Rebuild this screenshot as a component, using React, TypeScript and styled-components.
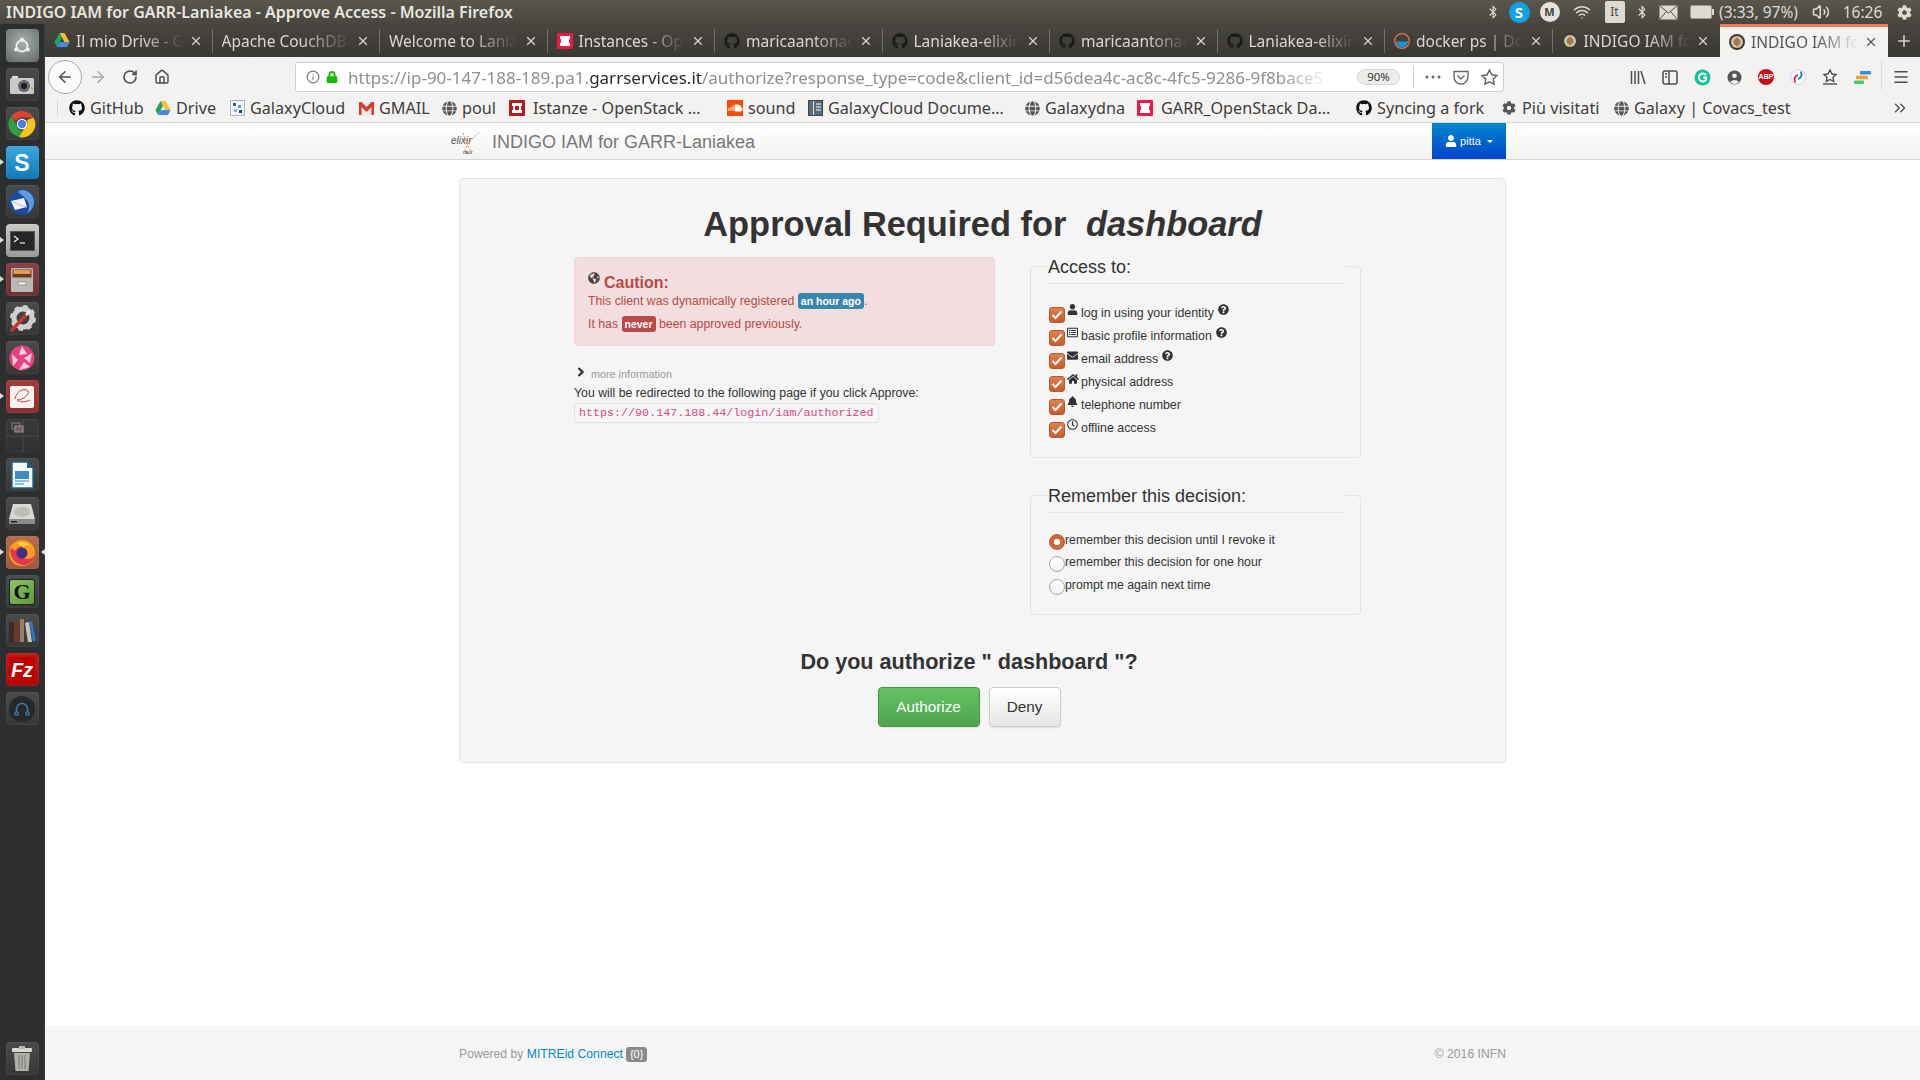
import { ReactNode } from 'react';
import styled, { createGlobalStyle } from 'styled-components';
import {
  FaBell,
  FaBluetoothB,
  FaCog,
  FaEnvelope,
  FaGithub,
  FaGlobe,
  FaGlobeAmericas,
  FaHome,
  FaLock,
  FaQuestionCircle,
  FaRegClock,
  FaRegListAlt,
  FaUser,
} from 'react-icons/fa';
import {
  ArrowLeft,
  ArrowRight,
  ChevronsRight,
  House,
  Info,
  Menu,
  Plus,
  RotateCw,
  Volume2,
  Wifi,
  X,
} from 'lucide-react';

const ChromeFont = `"Noto Sans", "Open Sans", sans-serif`;
const PageFont = `"Liberation Sans", Arial, sans-serif`;

const GlobalStyle = createGlobalStyle`
  html, body {
    margin: 0;
    height: 100%;
    background: #fff;
  }
  * {
    box-sizing: border-box;
  }
`;

const Screen = styled.div`
  width: 1920px;
  height: 1080px;
  overflow: hidden;
  display: flex;
  flex-direction: column;
  font-family: ${ChromeFont};
`;

/* ---- desktop panel ---- */

const TopBar = styled.div`
  height: 24px;
  flex: none;
  display: flex;
  align-items: center;
  padding-left: 6px;
  background: linear-gradient(#5a574e, #48463f);
  color: #e8e6e0;
`;

const WindowTitle = styled.div`
  font-size: 16px;
  font-weight: 600;
  white-space: nowrap;
`;

const StatusArea = styled.div`
  margin-left: auto;
  display: flex;
  align-items: center;
  height: 24px;
`;

const StatusSlot = styled.div<{ $w: number; $pl?: number }>`
  width: ${({ $w }) => $w}px;
  padding-left: ${({ $pl }) => $pl || 0}px;
  display: flex;
  align-items: center;
  justify-content: center;
  color: #dedbd2;
  font-size: 15.5px;
  white-space: nowrap;
`;

const SkypeDot = styled.div`
  width: 21px;
  height: 21px;
  border-radius: 50%;
  background: #11a3e4;
  color: #fff;
  font-size: 15px;
  font-weight: 700;
  line-height: 21px;
  text-align: center;
`;

const MegaDot = styled.div`
  width: 20px;
  height: 20px;
  border-radius: 50%;
  background: #e4e2dc;
  color: #45433c;
  font-size: 11px;
  font-weight: 700;
  line-height: 20px;
  text-align: center;
`;

const LangTile = styled.div`
  width: 20px;
  height: 22px;
  border-radius: 2px;
  background: #dcdad3;
  color: #4a4842;
  font-size: 12px;
  line-height: 22px;
  text-align: center;
`;

const Workspace = styled.div`
  flex: 1;
  min-height: 0;
  display: flex;
`;

/* ---- launcher ---- */

const Launcher = styled.nav`
  width: 45px;
  flex: none;
  display: flex;
  flex-direction: column;
  align-items: center;
  gap: 6px;
  padding-top: 5px;
  background: #2c2e2f;
  border-right: 1px solid #3a3b3b;
`;

const Tile = styled.div<{ $bg?: string; $pushDown?: boolean }>`
  position: relative;
  width: 33px;
  height: 33px;
  flex: none;
  border-radius: 4px;
  display: flex;
  align-items: center;
  justify-content: center;
  background: ${({ $bg }) => $bg || 'linear-gradient(#4a4b4b, #363838)'};
  box-shadow: inset 0 0 0 1px rgba(255, 255, 255, 0.05);
  margin-top: ${({ $pushDown }) => ($pushDown ? 'auto' : 0)};
  margin-bottom: ${({ $pushDown }) => ($pushDown ? '5px' : 0)};
`;

const Pip = styled.span<{ $right?: boolean }>`
  position: absolute;
  top: 13px;
  ${({ $right }) => ($right ? 'right: -6px;' : 'left: -6px;')}
  width: 0;
  height: 0;
  border-top: 3px solid transparent;
  border-bottom: 3px solid transparent;
  ${({ $right }) => ($right ? 'border-right: 4px solid #ddd;' : 'border-left: 4px solid #ddd;')}
`;

const FzLetters = styled.div`
  width: 26px;
  height: 26px;
  background: #bf0000;
  color: #fff;
  font: italic 700 20px/26px ${PageFont};
  text-align: center;
`;

const GLetter = styled.div`
  width: 26px;
  height: 26px;
  border-radius: 3px;
  background: linear-gradient(135deg, #8bc565, #5f9a41);
  border: 1px solid #222;
  color: #111;
  font: 700 22px/24px "Liberation Serif", serif;
  text-align: center;
`;

const launcherIcons: { key: string; bg?: string; pip?: boolean; both?: boolean; icon: ReactNode }[] = [
  {
    key: 'ubuntu',
    bg: 'radial-gradient(circle at 50% 40%, #a9b0ae, #5f6665)',
    icon: (
      <svg width="22" height="22" viewBox="0 0 22 22">
        <circle cx="11" cy="11" r="5.500" fill="none" stroke="#eee" strokeWidth="2" />
        <circle cx="11" cy="4.500" r="2" fill="#eee" />
        <circle cx="5.200" cy="14.500" r="2" fill="#eee" />
        <circle cx="16.800" cy="14.500" r="2" fill="#eee" />
      </svg>
    ),
  },
  {
    key: 'camera',
    icon: (
      <svg width="26" height="22" viewBox="0 0 26 22">
        <rect x="3" y="2" width="6" height="3" fill="#ddd" />
        <rect x="1" y="4" width="24" height="16" rx="1.500" fill="#c9c9c9" />
        <circle cx="15" cy="12" r="6" fill="#666" />
        <circle cx="15" cy="12" r="3" fill="#16202c" />
        <rect x="22" y="13" width="2" height="3" fill="#e3a33c" />
      </svg>
    ),
  },
  {
    key: 'chrome',
    icon: (
      <svg width="28" height="28" viewBox="0 0 28 28">
        <path d="M14 1a13 13 0 0 1 11.300 6.500H14a6.500 6.500 0 0 0-6 4L3.400 6A13 13 0 0 1 14 1z" fill="#e0412f" />
        <path d="M3.400 6 8.900 15.700a6.500 6.500 0 0 0 6 4.800L11 27A13 13 0 0 1 3.400 6z" fill="#2f9e44" />
        <path d="M25.300 7.500A13 13 0 0 1 11 27l5.600-9.300A6.500 6.500 0 0 0 19 10z" fill="#f6c31c" />
        <circle cx="14" cy="14" r="5.200" fill="#fff" />
        <circle cx="14" cy="14" r="4.200" fill="#4a7fe5" />
      </svg>
    ),
  },
  {
    key: 'skype',
    bg: 'linear-gradient(#3aa8e0, #1278b8)',
    pip: true,
    icon: (
      <svg width="28" height="28" viewBox="0 0 28 28">
        <text x="14" y="22" textAnchor="middle" fontFamily={PageFont} fontWeight="700" fontSize="23" fill="#fff">
          S
        </text>
      </svg>
    ),
  },
  {
    key: 'thunderbird',
    icon: (
      <svg width="28" height="28" viewBox="0 0 28 28">
        <circle cx="14" cy="14" r="13" fill="#1d4a9c" />
        <path d="M14 2a12 12 0 0 1 12 12c0 5-3 9-7 11 3-4 3-10-1-14-2-3-6-5-8-7 1-1 3-2 4-2z" fill="#5d9be0" />
        <path d="M3 13l13-3 3 9-12 3z" fill="#f3f3f3" />
        <path d="M3 13l9 4 7 2" fill="none" stroke="#b9c3d3" strokeWidth="1" />
      </svg>
    ),
  },
  {
    key: 'terminal',
    bg: 'linear-gradient(#c9c9c6, #9a9a97)',
    pip: true,
    icon: (
      <svg width="25" height="20" viewBox="0 0 25 20">
        <rect x="0.500" y="0.500" width="24" height="19" fill="#262626" stroke="#555" />
        <path d="M4 5l4 3-4 3" fill="none" stroke="#eee" strokeWidth="1.200" />
        <path d="M10 12h5" stroke="#eee" strokeWidth="1.200" />
      </svg>
    ),
  },
  {
    key: 'files',
    bg: 'linear-gradient(#864248, #6c3238)',
    pip: true,
    icon: (
      <svg width="24" height="26" viewBox="0 0 24 26">
        <rect x="1" y="1" width="22" height="24" rx="1.500" fill="#b9b9b6" />
        <rect x="2.500" y="2.500" width="19" height="8" fill="#6b3b24" />
        <rect x="3.500" y="3" width="17" height="4" fill="#e99a4c" />
        <rect x="8" y="15" width="8" height="3" fill="#f0f0f0" stroke="#777" strokeWidth=".6" />
      </svg>
    ),
  },
  {
    key: 'tools',
    icon: (
      <svg width="28" height="28" viewBox="0 0 28 28">
        <circle cx="15" cy="13" r="9" fill="none" stroke="#cfcfcf" strokeWidth="5" />
        <circle cx="15" cy="13" r="11.500" fill="none" stroke="#cfcfcf" strokeWidth="3" strokeDasharray="4.500 4.500" />
        <path d="M4 25L18 10" stroke="#c8352b" strokeWidth="3.400" strokeLinecap="round" />
        <path d="M18 10l4-4" stroke="#e8e8e8" strokeWidth="2.600" />
      </svg>
    ),
  },
  {
    key: 'ball',
    icon: (
      <svg width="26" height="26" viewBox="0 0 26 26">
        <circle cx="13" cy="13" r="12.500" fill="#e83f83" />
        <path d="M13 1l5 8-8 1zM3 9l6 6-5 6zM23 8l-2 10-6-5zM10 25l5-8 6 5z" fill="#f9cfdd" />
      </svg>
    ),
  },
  {
    key: 'doc',
    bg: 'linear-gradient(#a63b3c, #8c2e30)',
    pip: true,
    icon: (
      <svg width="26" height="24" viewBox="0 0 26 24">
        <rect x="1" y="1" width="24" height="22" rx="2" fill="#f3f3f1" />
        <path d="M6 14C8 4 17 3 19 6s-5 9-11 9c5 3 9 2 13 0" fill="none" stroke="#d33a36" strokeWidth="1" />
      </svg>
    ),
  },
  {
    key: 'workspaces',
    bg: 'linear-gradient(#3a3a3c, #2f2f31)',
    icon: (
      <svg width="33" height="33" viewBox="0 0 33 33">
        <path d="M17 0v33M0 17h33" stroke="#4c4c4c" />
        <rect x="6" y="4" width="8" height="6" fill="none" stroke="#8a7f85" />
        <rect x="9" y="7" width="8" height="6" fill="#6a5f65" stroke="#a09498" />
      </svg>
    ),
  },
  {
    key: 'writer',
    icon: (
      <svg width="24" height="28" viewBox="0 0 24 28">
        <path d="M2 1h15l6 6v20H2z" fill="#f4f7fa" stroke="#20628f" strokeWidth="1.400" />
        <path d="M17 1l6 6h-6z" fill="#20628f" />
        <rect x="5" y="10" width="14" height="8" fill="#3d8cc1" />
        <path d="M5 20h14M5 23h9" stroke="#6eb0dc" strokeWidth="1.400" />
      </svg>
    ),
  },
  {
    key: 'disk',
    icon: (
      <svg width="28" height="22" viewBox="0 0 28 22">
        <path d="M5 1h18l4 15v5H1v-5z" fill="#d8d8d5" />
        <ellipse cx="14" cy="9" rx="8" ry="5" fill="#bdbdba" />
        <rect x="1" y="16" width="26" height="5" fill="#8a8a88" />
        <rect x="3" y="18" width="6" height="1.500" fill="#222" />
      </svg>
    ),
  },
  {
    key: 'firefox',
    bg: 'linear-gradient(#b66e4c, #9c5b3e)',
    pip: true,
    both: true,
    icon: (
      <svg width="28" height="28" viewBox="0 0 28 28">
        <circle cx="14" cy="14" r="13" fill="#ff9b1f" />
        <path d="M2 12c1 9 8 15 15 14 5-1 9-5 10-10-3 4-8 5-11 3-3-1-4-4-3-6l4-1c-1-2-3-2-3-5-4 1-6 3-7 5-1-1-2-2-2-3-2 1-3 2-3 3z" fill="#e8344f" />
        <circle cx="14" cy="14" r="5.500" fill="#3b3486" />
        <path d="M9 4c4-2 10-1 14 3-3-1-6-1-8 1z" fill="#ffd23a" />
      </svg>
    ),
  },
  { key: 'g', icon: <GLetter>G</GLetter> },
  {
    key: 'books',
    icon: (
      <svg width="28" height="25" viewBox="0 0 28 25">
        <rect x="1" y="4" width="5" height="20" fill="#3e2a28" />
        <rect x="6" y="3" width="5" height="21" fill="#6b3a25" />
        <rect x="12" y="1" width="4" height="23" fill="#9a7f62" />
        <path d="M17 5l4-1 3 20-4 0z" fill="#c9c5b8" />
        <path d="M21 4l3-1 4 19-3 2z" fill="#2f74bf" />
      </svg>
    ),
  },
  { key: 'fz', bg: 'linear-gradient(#c01818, #a30e0e)', icon: <FzLetters>Fz</FzLetters> },
  {
    key: 'headphones',
    icon: (
      <svg width="28" height="28" viewBox="0 0 28 28">
        <circle cx="14" cy="14" r="13" fill="#26282a" />
        <path d="M8.500 17v-3a5.500 5.500 0 0 1 11 0v3" fill="none" stroke="#3d7fb5" strokeWidth="1.400" />
        <circle cx="8.500" cy="18.500" r="1.700" fill="none" stroke="#3d7fb5" strokeWidth="1.300" />
        <circle cx="19.500" cy="18.500" r="1.700" fill="none" stroke="#3d7fb5" strokeWidth="1.300" />
      </svg>
    ),
  },
];

const TrashIcon = () => (
  <svg width="24" height="27" viewBox="0 0 24 27">
    <rect x="2" y="3" width="20" height="4" rx="1" fill="#d8d8d4" />
    <rect x="9" y="1" width="6" height="3" fill="#b8b8b4" />
    <path d="M4 8h16l-1.500 18h-13z" fill="#b0b0ac" />
    <path d="M9 10v14M12 10v14M15 10v14" stroke="#77776f" />
  </svg>
);

/* ---- tabs ---- */

const Browser = styled.div`
  flex: 1;
  min-width: 0;
  display: flex;
  flex-direction: column;
`;

const TabStrip = styled.div`
  height: 33px;
  flex: none;
  display: flex;
  align-items: stretch;
  background: linear-gradient(#48463f, #3a3832);
`;

const Tab = styled.div<{ $active?: boolean; $sep?: boolean }>`
  position: relative;
  width: 167.5px;
  flex: none;
  display: flex;
  align-items: center;
  padding: 0 10px 0 9px;
  gap: 6px;
  color: ${({ $active }) => ($active ? '#555' : '#d9d7d0')};
  background: ${({ $active }) => ($active ? '#f3f2f1' : 'transparent')};
  border-top: ${({ $active }) => ($active ? '3px solid #ef7b53' : '0')};

  &::after {
    content: '';
    display: ${({ $sep }) => ($sep ? 'block' : 'none')};
    position: absolute;
    top: 5px;
    bottom: 4px;
    right: 0;
    width: 1px;
    background: rgba(255, 255, 255, 0.25);
  }
`;

const TabLabel = styled.div`
  flex: 1;
  min-width: 0;
  overflow: hidden;
  white-space: nowrap;
  font-size: 15.5px;
  -webkit-mask-image: linear-gradient(to right, #000 62%, transparent 100%);
  mask-image: linear-gradient(to right, #000 62%, transparent 100%);
`;

const NewTab = styled.div`
  flex: 1;
  display: flex;
  align-items: center;
  justify-content: center;
  color: #d9d7d0;
`;

const DriveIcon = () => (
  <svg width="16" height="15" viewBox="0 0 16 15">
    <path d="M5.500 0h5l5 9h-5z" fill="#f6c02c" />
    <path d="M5.500 0L0.500 9l2.500 5 5-9z" fill="#1ea362" />
    <path d="M3 14h10l2.500-5h-10z" fill="#4a86e8" />
  </svg>
);

const StackIcon = ({ dark }: { dark?: boolean }) => {
  const tone = dark ? '#b9191f' : '#ed1944';
  return (
    <svg width="16" height="16" viewBox="0 0 16 16">
      <rect width="16" height="16" rx="1" fill={tone} />
      <rect x="3" y="3" width="10" height="10" fill="#fff" />
      <rect x="0" y="6" width="4" height="4" fill={tone} />
      <rect x="12" y="6" width="4" height="4" fill={tone} />
      {dark && <rect x="6" y="6" width="4" height="4" fill={tone} />}
    </svg>
  );
};

const IamFavicon = () => (
  <svg width="16" height="16" viewBox="0 0 16 16">
    <circle cx="8" cy="8" r="8" fill="#3f3c33" />
    <circle cx="8" cy="8" r="6" fill="#d1c6a8" />
    <circle cx="8" cy="8" r="3.500" fill="#8c8468" />
    <path d="M8 3.500v9" stroke="#d8671d" strokeWidth="1.600" />
  </svg>
);

const DockerFavicon = () => (
  <svg width="16" height="16" viewBox="0 0 16 16">
    <circle cx="8" cy="8" r="7.400" fill="none" stroke="#e8763c" strokeWidth="1.200" />
    <path d="M1.500 8.500h11c1 0 1.500-.8 2-1.500 0 4-3 7.500-7 7.500-3 0-5.500-2.500-6-6z" fill="#1d91d4" />
  </svg>
);

const tabs: { title: string; icon?: ReactNode; active?: boolean }[] = [
  { title: 'Il mio Drive - Google', icon: <DriveIcon /> },
  { title: 'Apache CouchDB' },
  { title: 'Welcome to Laniakea' },
  { title: 'Instances - OpenStack', icon: <StackIcon /> },
  { title: 'maricaantonacci', icon: <FaGithub size={16} color="#1b1b1b" /> },
  { title: 'Laniakea-elixir-it', icon: <FaGithub size={16} color="#1b1b1b" /> },
  { title: 'maricaantonacci', icon: <FaGithub size={16} color="#1b1b1b" /> },
  { title: 'Laniakea-elixir-it', icon: <FaGithub size={16} color="#1b1b1b" /> },
  { title: 'docker ps | Docker', icon: <DockerFavicon /> },
  { title: 'INDIGO IAM for GARR', icon: <IamFavicon /> },
  { title: 'INDIGO IAM for GARR', icon: <IamFavicon />, active: true },
];

/* ---- toolbar ---- */

const Toolbar = styled.div`
  position: relative;
  z-index: 1;
  height: 35px;
  flex: none;
  display: flex;
  align-items: flex-start;
  padding: 3px 0 0 3px;
  background: #f3f2f1;
`;

const BackButton = styled.div`
  width: 34px;
  height: 34px;
  flex: none;
  border-radius: 50%;
  border: 1px solid #aaa9a7;
  background: #fbfbfb;
  color: #4a4a4a;
  display: flex;
  align-items: center;
  justify-content: center;
`;

const ToolButton = styled.div<{ $w?: number; $color?: string }>`
  width: ${({ $w }) => $w || 32}px;
  height: 34px;
  flex: none;
  display: flex;
  align-items: center;
  justify-content: center;
  color: ${({ $color }) => $color || '#4d4d4d'};
`;

const UrlBar = styled.div`
  width: 1209px;
  height: 30px;
  margin: 2px 0 0 117px;
  flex: none;
  display: flex;
  align-items: center;
  padding-left: 9px;
  background: #fff;
  border: 1px solid #cfcfcd;
  border-radius: 3px;
`;

const LockSlot = styled.div`
  width: 12px;
  margin: 0 10px 0 5px;
  flex: none;
  display: flex;
  color: #12bc00;
`;

const UrlText = styled.div`
  flex: 1;
  min-width: 0;
  overflow: hidden;
  white-space: nowrap;
  font-size: 17px;
  color: #8f8f8f;
  -webkit-mask-image: linear-gradient(to right, #000 95%, transparent 100%);
  mask-image: linear-gradient(to right, #000 95%, transparent 100%);

  b {
    font-weight: 400;
    color: #2b2b2b;
  }
`;

const ZoomPill = styled.div`
  width: 43px;
  height: 16px;
  margin-left: 28px;
  flex: none;
  border-radius: 8px;
  background: #ececea;
  border: 1px solid #d6d6d4;
  font-size: 11.5px;
  line-height: 14px;
  color: #333;
  text-align: center;
`;

const UrlDivider = styled.div`
  width: 1px;
  height: 22px;
  margin: 0 5px 0 13px;
  flex: none;
  background: #d0d0ce;
`;

const ToolDivider = styled.div`
  width: 1px;
  height: 30px;
  margin: 0 3px;
  flex: none;
  background: #dcdbd9;
`;

const ToolTray = styled.div`
  margin-left: 118px;
  display: flex;
  align-items: flex-start;
`;

const AbpDot = styled.div`
  width: 16px;
  height: 16px;
  border-radius: 50%;
  background: #c70d16;
  color: #fff;
  font: 700 7px/16px ${PageFont};
  text-align: center;
`;

/* ---- bookmarks ---- */

const BookmarkBar = styled.div`
  height: 30px;
  flex: none;
  display: flex;
  align-items: center;
  padding: 2px 0 0 12px;
  background: #f3f2f1;
`;

const BookmarkDivider = styled.div`
  width: 1px;
  height: 18px;
  margin-right: 11px;
  flex: none;
  background: #d8d7d5;
`;

const Bookmark = styled.div<{ $w: number; $wide?: boolean }>`
  width: ${({ $w }) => $w}px;
  flex: none;
  display: flex;
  align-items: center;
  gap: ${({ $wide }) => ($wide ? 8 : 5)}px;
  font-size: 16.2px;
  color: #3d3d3d;
  white-space: nowrap;
`;

const BookmarkIcon = styled.span`
  width: 16px;
  height: 16px;
  flex: none;
  display: flex;
  align-items: center;
  justify-content: center;
`;

const Overflow = styled.div`
  margin-left: auto;
  width: 40px;
  display: flex;
  justify-content: center;
  color: #555;
`;

const GalaxyCloudIcon = () => (
  <svg width="15" height="16" viewBox="0 0 15 16">
    <rect x=".5" y=".5" width="14" height="15" fill="#f5f8fc" stroke="#a8b4c4" />
    <rect x="3" y="3" width="3" height="3" fill="#2a5ea8" />
    <rect x="8" y="5" width="3" height="3" fill="#6b93cc" />
    <rect x="4" y="9" width="3" height="3" fill="#8fb0d9" />
    <rect x="9" y="10" width="3" height="3" fill="#1f4a8a" />
  </svg>
);

const GmailIcon = () => (
  <svg width="15" height="13" viewBox="0 0 15 13">
    <rect width="15" height="13" fill="#e8e8e8" />
    <path d="M0 0h2.500l5 5 5-5H15v13h-2.500V5l-5 5-5-5v8H0z" fill="#d93a2b" />
  </svg>
);

const SoundIcon = () => (
  <svg width="16" height="16" viewBox="0 0 16 16">
    <rect width="16" height="16" fill="#fb4c03" />
    <path d="M2 11V8M4 11V7M6 11V5.500M8 11V5h3a3 3 0 0 1 3 3 1.500 1.500 0 0 1-1 3z" stroke="#fff" fill="#fff" strokeWidth="1" />
  </svg>
);

const DocsIcon = () => (
  <svg width="15" height="16" viewBox="0 0 15 16">
    <rect x=".5" y=".5" width="14" height="15" fill="#5a6b78" stroke="#39454f" />
    <rect x="5" y="1" width="1" height="14" fill="#ddd" />
    <path d="M8 4h5M8 7h5M8 10h5" stroke="#fff" strokeWidth="1.200" />
  </svg>
);

const bookmarks: { label: string; w: number; wide?: boolean; icon: ReactNode }[] = [
  { label: 'GitHub', w: 86, icon: <FaGithub size={16} color="#111" /> },
  { label: 'Drive', w: 74, icon: <DriveIcon /> },
  { label: 'GalaxyCloud', w: 129, icon: <GalaxyCloudIcon /> },
  { label: 'GMAIL', w: 83, icon: <GmailIcon /> },
  { label: 'poul', w: 68, icon: <FaGlobe size={15} color="#555" /> },
  { label: 'Istanze - OpenStack …', w: 218, wide: true, icon: <StackIcon dark /> },
  { label: 'sound', w: 80, icon: <SoundIcon /> },
  { label: 'GalaxyCloud Docume…', w: 217, icon: <DocsIcon /> },
  { label: 'Galaxydna', w: 113, icon: <FaGlobe size={15} color="#555" /> },
  { label: 'GARR_OpenStack Da…', w: 219, wide: true, icon: <StackIcon /> },
  { label: 'Syncing a fork', w: 145, icon: <FaGithub size={16} color="#111" /> },
  { label: 'Più visitati', w: 112, icon: <FaCog size={14} color="#555" /> },
  { label: 'Galaxy | Covacs_test', w: 190, icon: <FaGlobe size={15} color="#555" /> },
];

/* ---- web page ---- */

const Page = styled.main`
  flex: 1;
  min-height: 0;
  display: flex;
  flex-direction: column;
  background: #fff;
  font-family: ${PageFont};
  color: #333;
`;

const NavBar = styled.header`
  height: 38px;
  flex: none;
  background: linear-gradient(#fff, #f2f2f2);
  border-top: 1px solid #d6d5d3;
  border-bottom: 1px solid #d4d4d4;
`;

const NavInner = styled.div`
  width: 1047px;
  height: 100%;
  margin: 0 auto;
  display: flex;
  align-items: stretch;
  justify-content: space-between;
`;

const Brand = styled.div`
  display: flex;
  align-items: center;
  margin-left: -8px;
  padding-top: 2px;
  gap: 10px;
  font-size: 18px;
  color: #777;
`;

const UserMenu = styled.div`
  width: 74px;
  display: flex;
  align-items: center;
  justify-content: center;
  gap: 3px;
  background: linear-gradient(#0088cc, #0044cc);
  color: #fff;
  font-size: 11px;
`;

const Caret = styled.span`
  width: 0;
  height: 0;
  margin-left: 3px;
  border-left: 3px solid transparent;
  border-right: 3px solid transparent;
  border-top: 3px solid #fff;
`;

const Panel = styled.section`
  width: 1047px;
  margin: 18px auto 0;
  padding: 23px 0 35px 114px;
  background: #f5f5f5;
  border: 1px solid #e3e3e3;
  border-radius: 4px;
`;

const Inner = styled.div`
  width: 790px;
`;

const PageTitle = styled.h1`
  margin: 0 0 2px -114px;
  width: 1045px;
  font-size: 34.4px;
  line-height: 44px;
  font-weight: 700;
  text-align: center;
  color: #333;

  em {
    margin-left: 10px;
  }
`;

const Columns = styled.div`
  display: grid;
  grid-template-columns: 421px 331px;
  column-gap: 35px;
  align-items: start;
`;

const LeftColumn = styled.div`
  padding-top: 9px;
`;

const Alert = styled.div`
  height: 89px;
  padding: 14px 13px;
  background: #f2dede;
  border: 1px solid #eed3d7;
  border-radius: 4px;
  color: #b94a48;
  font-size: 12.3px;
`;

const AlertHead = styled.div`
  display: flex;
  align-items: flex-start;
  gap: 4px;
  height: 18px;
  font-size: 16px;
  font-weight: 700;
  line-height: 22px;

  svg {
    color: #444;
  }
`;

const AlertLine = styled.div`
  height: 23px;
  line-height: 23px;
`;

const Label = styled.span<{ $tone: 'info' | 'danger' }>`
  display: inline-block;
  padding: 0 3px;
  line-height: 16px;
  border-radius: 3px;
  font-size: 10.5px;
  font-weight: 700;
  color: #fff;
  background: ${({ $tone }) => ($tone === 'info' ? '#3a87ad' : '#b94a48')};
`;

const MoreInfo = styled.div`
  margin: 20px 0 0 3px;
  height: 16px;
  display: flex;
  align-items: center;
  gap: 6px;
  font-size: 10.8px;
  color: #999;

  svg {
    color: #333;
    margin-top: -4px;
  }
`;

const RedirectNote = styled.p`
  margin: 2px 0 0;
  font-size: 12.3px;
  line-height: 18px;
  color: #333;
`;

const Code = styled.code`
  display: inline-block;
  height: 20px;
  padding: 0 4px;
  background: #f7f7f9;
  border: 1px solid #e1e1e8;
  border-radius: 3px;
  color: #e0457b;
  font: 11.7px/18px "Liberation Mono", monospace;
`;

const Fields = styled.fieldset`
  margin: 0 0 19px;
  padding: 0 16px 15px 17px;
  border: 1px solid #e3e3e3;
  border-radius: 4px;
  min-width: 0;

  &:last-child {
    margin-bottom: 0;
  }
`;

const Legend = styled.legend`
  width: 295px;
  height: 36px;
  padding: 0;
  line-height: 38px;
  font-size: 18px;
  color: #333;
  border-bottom: 1px solid #e5e5e5;
`;

const Options = styled.div<{ $top: number }>`
  padding: ${({ $top }) => $top}px 0 0 1px;
`;

const ScopeRow = styled.div`
  height: 23px;
  display: flex;
  align-items: flex-start;
  font-size: 12.4px;
  line-height: 19px;
  color: #333;
`;

const CheckBox = styled.span`
  width: 16px;
  height: 16px;
  margin-top: 3px;
  flex: none;
  border-radius: 3px;
  border: 1px solid #b85a30;
  background: linear-gradient(#e2804d, #c95a2b);
  display: flex;
  align-items: center;
  justify-content: center;
`;

const ScopeIcon = styled.span`
  width: 15px;
  height: 12px;
  margin: 0 1px 0 0;
  flex: none;
  display: flex;
  justify-content: center;
  color: #333;
`;

const HelpIcon = styled.span`
  display: flex;
  margin-left: 4px;
  color: #333;
`;

const RadioRow = styled.div`
  height: 22.4px;
  display: flex;
  align-items: flex-start;
  font-size: 12.3px;
  line-height: 18px;
  color: #333;

  &:last-child {
    height: 23px;
  }
`;

const Radio = styled.span<{ $on?: boolean }>`
  width: 16px;
  height: 16px;
  margin: 3px 0 0 0;
  flex: none;
  border-radius: 50%;
  border: 1px solid ${({ $on }) => ($on ? '#b85a30' : '#a8a8a8')};
  background: ${({ $on }) => ($on ? 'radial-gradient(circle, #fff 0 3px, #d4673a 3.5px)' : 'linear-gradient(#fff, #f0f0f0)')};
`;

const AskHeading = styled.h2`
  margin: 34px 0 12px;
  font-size: 21.6px;
  line-height: 26px;
  font-weight: 700;
  text-align: center;
  color: #333;
`;

const Actions = styled.div`
  display: flex;
  justify-content: center;
  gap: 9px;
`;

const Button = styled.button<{ $primary?: boolean }>`
  height: 40px;
  width: ${({ $primary }) => ($primary ? 102 : 72)}px;
  padding: 0;
  font: 15.3px ${PageFont};
  border-radius: 4px;
  border: 1px solid ${({ $primary }) => ($primary ? '#469446' : '#ccc')};
  color: ${({ $primary }) => ($primary ? '#fff' : '#333')};
  background: ${({ $primary }) =>
    $primary ? 'linear-gradient(#62c462, #51a351)' : 'linear-gradient(#fff, #e6e6e6)'};
  box-shadow: 0 1px 2px rgba(0, 0, 0, 0.08);
`;

const Footer = styled.footer`
  margin-top: auto;
  height: 54px;
  padding-top: 2px;
  flex: none;
  background: #f5f5f5;
  display: flex;
  justify-content: center;
  align-items: center;
  font-size: 12.2px;
  color: #999;
`;

const FooterInner = styled.div`
  width: 1047px;
  display: flex;
  justify-content: space-between;
  align-items: center;

  a {
    color: #0088cc;
    text-decoration: none;
  }
`;

const Badge = styled.span`
  display: inline-block;
  margin-left: 3px;
  padding: 0 4px;
  border-radius: 3px;
  background: #8a8a8a;
  color: #fff;
  font-size: 11px;
  line-height: 15px;
`;

const ElixirLogo = () => (
  <svg width="31" height="26" viewBox="0 0 31 26">
    <text x="0" y="15" fontFamily={PageFont} fontStyle="italic" fontSize="10" fill="#555">
      elixir
    </text>
    <path d="M14 22C16 15 21 9 29 3" stroke="#e8892b" strokeWidth="1" strokeDasharray="2 1.500" fill="none" />
    <path d="M12 4C14 10 16 16 20 22" stroke="#e8892b" strokeWidth="1" strokeDasharray="2 1.500" fill="none" />
    <text x="12" y="25" fontFamily={PageFont} fontWeight="700" fontSize="3.500" fill="#444">
      ITALY
    </text>
  </svg>
);

const Tick = () => (
  <svg width="12" height="10" viewBox="0 0 12 10">
    <path d="M1.500 5l3 3L10.500 1.500" fill="none" stroke="#fff" strokeWidth="2" />
  </svg>
);

const scopes: { text: string; icon: ReactNode; help?: boolean }[] = [
  { text: 'log in using your identity', icon: <FaUser size={11} />, help: true },
  { text: 'basic profile information', icon: <FaRegListAlt size={11} />, help: true },
  { text: 'email address', icon: <FaEnvelope size={11} />, help: true },
  { text: 'physical address', icon: <FaHome size={12} /> },
  { text: 'telephone number', icon: <FaBell size={11} /> },
  { text: 'offline access', icon: <FaRegClock size={11} /> },
];

const remember = [
  'remember this decision until I revoke it',
  'remember this decision for one hour',
  'prompt me again next time',
];

export default function App() {
  return (
    <Screen>
      <GlobalStyle />
      <TopBar>
        <WindowTitle>INDIGO IAM for GARR-Laniakea - Approve Access - Mozilla Firefox</WindowTitle>
        <StatusArea>
          <StatusSlot $w={25}><FaBluetoothB size={14} /></StatusSlot>
          <StatusSlot $w={28}><SkypeDot>S</SkypeDot></StatusSlot>
          <StatusSlot $w={33}><MegaDot>M</MegaDot></StatusSlot>
          <StatusSlot $w={32}><Wifi size={18} /></StatusSlot>
          <StatusSlot $w={33}><LangTile>It</LangTile></StatusSlot>
          <StatusSlot $w={21}><FaBluetoothB size={14} /></StatusSlot>
          <StatusSlot $w={32}>
            <svg width="19" height="15" viewBox="0 0 19 15">
              <rect x=".5" y=".5" width="18" height="14" fill="#dedbd2" />
              <path d="M1 1l8.500 7L18 1M1 14l6-7M18 14l-6-7" fill="none" stroke="#48463f" strokeWidth="1" />
            </svg>
          </StatusSlot>
          <StatusSlot $w={35}>
            <svg width="24" height="14" viewBox="0 0 24 14">
              <rect x=".5" y=".5" width="21" height="13" rx="1.500" fill="#dedbd2" stroke="#9c9a92" />
              <rect x="22" y="4" width="2" height="6" fill="#dedbd2" />
            </svg>
          </StatusSlot>
          <StatusSlot $w={79}>(3:33, 97%)</StatusSlot>
          <StatusSlot $w={45}><Volume2 size={18} /></StatusSlot>
          <StatusSlot $w={39}>16:26</StatusSlot>
          <StatusSlot $w={38} $pl={6}><FaCog size={15} /></StatusSlot>
        </StatusArea>
      </TopBar>
      <Workspace>
        <Launcher>
          {launcherIcons.map(item => (
            <Tile key={item.key} $bg={item.bg}>
              {item.pip && <Pip />}
              {item.both && <Pip $right />}
              {item.icon}
            </Tile>
          ))}
          <Tile $pushDown>
            <TrashIcon />
          </Tile>
        </Launcher>
        <Browser>
          <TabStrip>
            {tabs.map((tab, i) => (
              <Tab
                key={i}
                $active={tab.active}
                $sep={!tab.active && i < tabs.length - 2}
              >
                {tab.icon}
                <TabLabel>{tab.title}</TabLabel>
                <X size={14} />
              </Tab>
            ))}
            <NewTab>
              <Plus size={18} />
            </NewTab>
          </TabStrip>
          <Toolbar>
            <BackButton>
              <ArrowLeft size={18} />
            </BackButton>
            <ToolButton $color="#a9a9a9"><ArrowRight size={18} /></ToolButton>
            <ToolButton><RotateCw size={16} strokeWidth={2.4} /></ToolButton>
            <ToolButton><House size={16} strokeWidth={2.2} /></ToolButton>
            <UrlBar>
              <ToolButton $w={16} $color="#777"><Info size={14} /></ToolButton>
              <LockSlot><FaLock size={12} /></LockSlot>
              <UrlText>
                https://ip-90-147-188-189.pa1.<b>garrservices.it</b>
                /authorize?response_type=code&amp;client_id=d56dea4c-ac8c-4fc5-9286-9f8bace5
              </UrlText>
              <ZoomPill>90%</ZoomPill>
              <UrlDivider />
              <ToolButton $w={28} $color="#666">
                <svg width="16" height="4" viewBox="0 0 16 4" fill="currentColor">
                  <circle cx="2" cy="2" r="1.500" />
                  <circle cx="8" cy="2" r="1.500" />
                  <circle cx="14" cy="2" r="1.500" />
                </svg>
              </ToolButton>
              <ToolButton $w={28} $color="#666">
                <svg width="16" height="15" viewBox="0 0 16 15" fill="none" stroke="currentColor" strokeWidth="1.400">
                  <path d="M1 1.500h14v5.500a7 7 0 0 1-14 0z" />
                  <path d="M4.500 5.500L8 9l3.500-3.500" />
                </svg>
              </ToolButton>
              <ToolButton $w={28} $color="#666">
                <svg width="17" height="16" viewBox="0 0 17 16" fill="none" stroke="currentColor" strokeWidth="1.500">
                  <path d="M8.500 1l2.300 4.700 5.200.8-3.800 3.600.9 5.100-4.600-2.400-4.600 2.400.9-5.100L1 6.500l5.200-.8z" />
                </svg>
              </ToolButton>
            </UrlBar>
            <ToolTray>
              <ToolButton>
                <svg width="16" height="15" viewBox="0 0 16 15" stroke="currentColor" strokeWidth="1.500">
                  <path d="M1.500 1v13M5 1v13M8.500 1v13M11 1l4 13" />
                </svg>
              </ToolButton>
              <ToolButton>
                <svg width="16" height="15" viewBox="0 0 16 15" fill="none" stroke="currentColor" strokeWidth="1.500">
                  <rect x="1" y="1" width="14" height="13" rx="2" />
                  <path d="M7 1v13M3 4h2M3 7h2" />
                </svg>
              </ToolButton>
              <ToolButton>
                <svg width="17" height="17" viewBox="0 0 17 17">
                  <circle cx="8.500" cy="8.500" r="8" fill="#15c39a" />
                  <path d="M12 6a4 4 0 1 0 0 5v-2.500H9" fill="none" stroke="#fff" strokeWidth="1.800" />
                </svg>
              </ToolButton>
              <ToolButton>
                <svg width="15" height="15" viewBox="0 0 15 15">
                  <circle cx="7.500" cy="7.500" r="7" fill="#555" />
                  <circle cx="7.500" cy="5.800" r="2.300" fill="#f3f2f1" />
                  <path d="M3 12c1-2.500 8-2.500 9 0a6 6 0 0 1-9 0z" fill="#f3f2f1" />
                </svg>
              </ToolButton>
              <ToolButton><AbpDot>ABP</AbpDot></ToolButton>
              <ToolButton>
                <svg width="16" height="16" viewBox="0 0 16 16" fill="none" strokeWidth="1.800">
                  <circle cx="8" cy="8" r="7.400" stroke="#bcd6ea" strokeWidth="1" fill="#f6fbff" />
                  <path d="M10.500 2.500C13 6 11 9 8 10" stroke="#1c77c3" />
                  <path d="M5.500 13.500C3 10 5 7 8 6" stroke="#d9262c" />
                </svg>
              </ToolButton>
              <ToolButton>
                <svg width="16" height="16" viewBox="0 0 16 16" fill="none" stroke="currentColor" strokeWidth="1.400">
                  <path d="M8 1l2 4 4 .6-3 2.900.7 4-3.700-2-3.700 2 .7-4-3-2.900L6 5z" />
                  <path d="M1 15h14" />
                </svg>
              </ToolButton>
              <ToolButton>
                <svg width="17" height="13" viewBox="0 0 17 13">
                  <rect x="6" y="0" width="11" height="3.400" rx="1" fill="#2e8ef0" />
                  <rect x="2" y="4.800" width="12" height="3.400" rx="1" fill="#f79b2e" />
                  <rect x="0" y="9.600" width="10" height="3.400" rx="1" fill="#37cf7a" />
                </svg>
              </ToolButton>
            </ToolTray>
            <ToolDivider />
            <ToolButton><Menu size={18} /></ToolButton>
          </Toolbar>
          <BookmarkBar>
            <BookmarkDivider />
            {bookmarks.map(mark => (
              <Bookmark key={mark.label} $w={mark.w} $wide={mark.wide}>
                <BookmarkIcon>{mark.icon}</BookmarkIcon>
                {mark.label}
              </Bookmark>
            ))}
            <Overflow>
              <ChevronsRight size={18} />
            </Overflow>
          </BookmarkBar>
          <Page>
            <NavBar>
              <NavInner>
                <Brand>
                  <ElixirLogo />
                  INDIGO IAM for GARR-Laniakea
                </Brand>
                <UserMenu>
                  <FaUser size={12} /> pitta <Caret />
                </UserMenu>
              </NavInner>
            </NavBar>
            <Panel>
              <PageTitle>
                Approval Required for <em>dashboard</em>
              </PageTitle>
              <Inner>
                <Columns>
                  <LeftColumn>
                    <Alert>
                      <AlertHead>
                        <FaGlobeAmericas size={12} /> Caution:
                      </AlertHead>
                      <AlertLine>
                        This client was dynamically registered <Label $tone="info">an hour ago</Label>.
                      </AlertLine>
                      <AlertLine>
                        It has <Label $tone="danger">never</Label> been approved previously.
                      </AlertLine>
                    </Alert>
                    <MoreInfo>
                      <svg width="8" height="10" viewBox="0 0 8 10">
                        <path d="M1.500 1l4 4-4 4" fill="none" stroke="currentColor" strokeWidth="2.400" />
                      </svg>
                      more information
                    </MoreInfo>
                    <RedirectNote>You will be redirected to the following page if you click Approve:</RedirectNote>
                    <Code>https://90.147.188.44/login/iam/authorized</Code>
                  </LeftColumn>
                  <div>
                    <Fields>
                      <Legend>Access to:</Legend>
                      <Options $top={20}>
                        {scopes.map(scope => (
                          <ScopeRow key={scope.text}>
                            <CheckBox><Tick /></CheckBox>
                            <ScopeIcon>{scope.icon}</ScopeIcon>
                            {scope.text}
                            {scope.help && (
                              <HelpIcon><FaQuestionCircle size={11} /></HelpIcon>
                            )}
                          </ScopeRow>
                        ))}
                      </Options>
                    </Fields>
                    <Fields>
                      <Legend>Remember this decision:</Legend>
                      <Options $top={18}>
                        {remember.map((text, i) => (
                          <RadioRow key={text}>
                            <Radio $on={i === 0} />
                            {text}
                          </RadioRow>
                        ))}
                      </Options>
                    </Fields>
                  </div>
                </Columns>
                <AskHeading>Do you authorize " dashboard "?</AskHeading>
                <Actions>
                  <Button $primary>Authorize</Button>
                  <Button>Deny</Button>
                </Actions>
              </Inner>
            </Panel>
            <Footer>
              <FooterInner>
                <span>
                  Powered by <a href="#">MITREid Connect</a>
                  <Badge>{'{0}'}</Badge>
                </span>
                <span>© 2016 INFN</span>
              </FooterInner>
            </Footer>
          </Page>
        </Browser>
      </Workspace>
    </Screen>
  );
}
